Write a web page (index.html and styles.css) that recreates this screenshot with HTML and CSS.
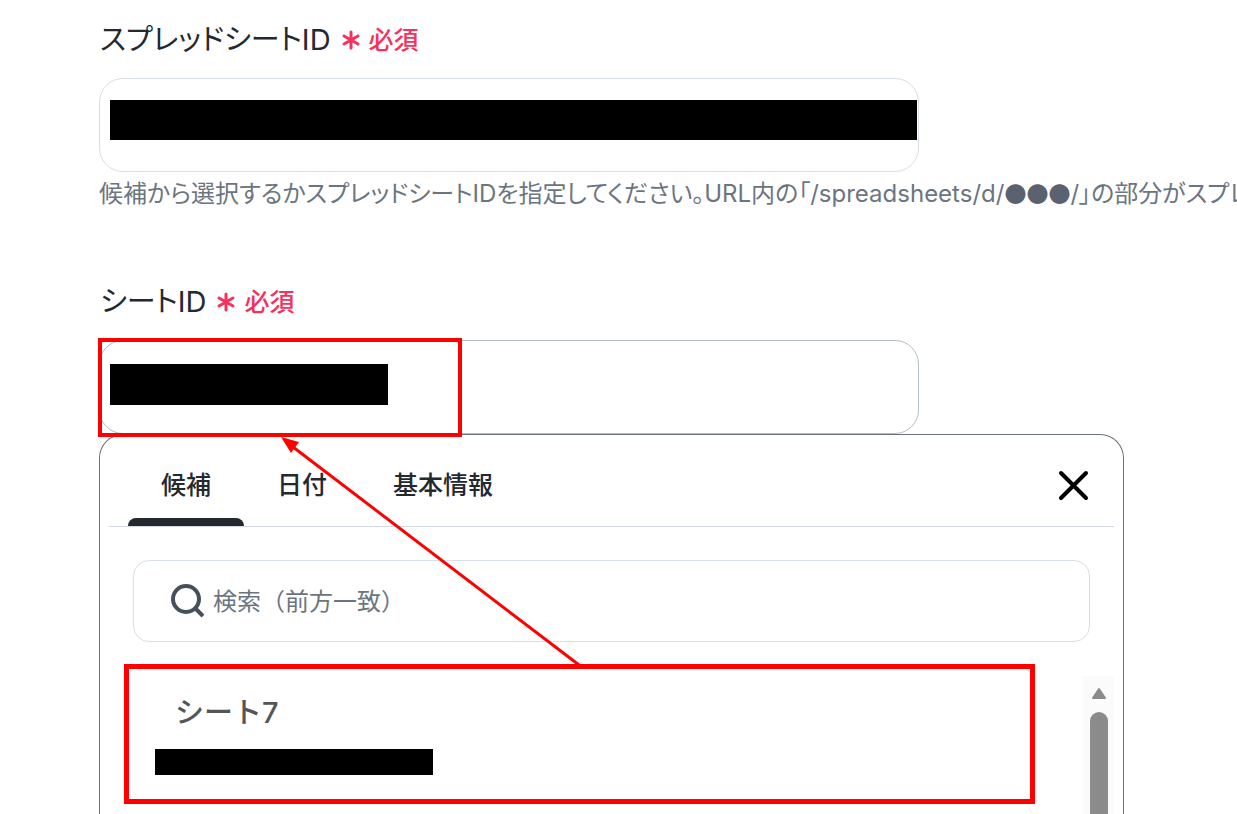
FILE: index.html
```html
<!DOCTYPE html>
<html lang="ja">
<head>
<meta charset="utf-8">
<title>シートID</title>
<link rel="stylesheet" href="styles.css">
</head>
<body>
<main class="form">
  <section class="field">
    <label class="field-label" for="spreadsheet-id">スプレッドシートID <span class="required"><svg class="asterisk" viewBox="0 0 20 20" aria-hidden="true"><path d="M10 2v16M3 6l14 8M3 14l14-8"/></svg>必須</span></label>
    <div class="control">
      <input class="text-input" id="spreadsheet-id" type="text">
      <span class="mask mask-full"></span>
    </div>
    <p class="help">候補から選択するかスプレッドシートIDを指定してください。URL内の「/spreadsheets/d/<span class="dots">●●●</span>/」の部分がスプレ</p>
  </section>

  <section class="field">
    <label class="field-label" for="sheet-id">シートID <span class="required"><svg class="asterisk" viewBox="0 0 20 20" aria-hidden="true"><path d="M10 2v16M3 6l14 8M3 14l14-8"/></svg>必須</span></label>
    <div class="control">
      <input class="text-input is-active" id="sheet-id" type="text">
      <span class="mask mask-short"></span>
      <span class="mark mark-input"></span>
      <svg class="arrow" viewBox="0 0 310 236" aria-hidden="true"><path class="arrow-line" d="M14 11L304 232"/><path class="arrow-head" d="M2 1L20 6L12 17Z"/></svg>
    </div>
    <div class="panel">
      <header class="panel-head">
        <nav class="tabs">
          <button class="tab is-selected" type="button">候補</button>
          <button class="tab" type="button">日付</button>
          <button class="tab" type="button">基本情報</button>
        </nav>
        <button class="close" type="button" aria-label="閉じる"><svg viewBox="0 0 32 32" aria-hidden="true"><path d="M4 4l25 25M29 4L4 29"/></svg></button>
      </header>
      <div class="search">
        <svg class="search-icon" viewBox="0 0 34 34" aria-hidden="true"><circle cx="16" cy="15" r="13"/><path d="M25 24l8 8"/></svg>
        <input class="search-input" type="text" placeholder="検索（前方一致）" aria-label="検索（前方一致）">
      </div>
      <div class="results">
        <button class="option" type="button">
          <span class="option-name">シート7</span>
          <span class="option-id"></span>
        </button>
        <div class="scrollbar">
          <svg class="scroll-up" viewBox="0 0 16 13" aria-hidden="true"><path d="M8 2L14 11H2Z"/></svg>
          <span class="thumb"></span>
        </div>
      </div>
    </div>
  </section>
</main>
</body>
</html>
```
FILE: styles.css
```css
* { box-sizing: border-box; }

body {
  margin: 0;
  background: #fff;
  color: #23292f;
  font-family: Inter, "Noto Sans CJK JP", sans-serif;
}

button, input {
  font: inherit;
  color: inherit;
}

button {
  border: 0;
  padding: 0;
  background: none;
}

.form {
  display: flex;
  flex-direction: column;
  gap: 74px;
  height: 100vh;
  overflow: hidden;
  padding: 20px 0 0 99px;
}

.field-label {
  display: flex;
  align-items: center;
  gap: 10px;
  height: 40px;
  margin-bottom: 18px;
  padding-left: 1px;
  font-size: 29px;
  line-height: 40px;
  font-feature-settings: "palt";
}

.required {
  display: flex;
  align-items: center;
  gap: 8px;
  color: #f5325c;
  font-size: 25px;
  font-weight: 500;
  font-feature-settings: normal;
}

.asterisk {
  width: 20px;
  height: 20px;
  fill: none;
  stroke: currentColor;
  stroke-width: 3;
  stroke-linecap: round;
}

.control {
  position: relative;
  max-width: 820px;
}

.text-input {
  display: block;
  width: 100%;
  height: 94px;
  padding: 0 24px;
  border: 1px solid #d9dfe6;
  border-radius: 24px;
  background: #fff;
  font-size: 25px;
}

.text-input.is-active { border-color: #b3bec8; }

.mask {
  position: absolute;
  left: 11px;
  height: 40px;
  background: #000;
}

.mask-full { top: 22px; right: 2px; }
.mask-short { top: 24px; width: 278px; height: 41px; }

.mark {
  position: absolute;
  border: 4px solid #f00;
}

.mark-input {
  z-index: 2;
  top: -2px;
  left: -1px;
  width: 364px;
  height: 99px;
}

.arrow {
  position: absolute;
  z-index: 3;
  top: 96px;
  left: 180px;
  width: 310px;
  height: 236px;
  pointer-events: none;
}

.arrow-line { fill: none; stroke: #f00; stroke-width: 3; }
.arrow-head { fill: #f00; }

.help {
  margin: 0;
  padding-top: 4px;
  overflow: hidden;
  color: #6b7580;
  font-size: 24px;
  line-height: 32px;
  height: 36px;
  white-space: nowrap;
  font-feature-settings: "palt";
}

.dots {
  color: #59626e;
  font-family: "Noto Sans CJK JP", sans-serif;
  font-size: 22px;
}

.panel {
  max-width: 1025px;
  margin-right: 24px;
  padding: 0 9px;
  border: 1px solid #69717b;
  border-bottom: 0;
  border-radius: 24px 24px 0 0;
  background: #fff;
}

.panel-head {
  display: flex;
  align-items: stretch;
  justify-content: space-between;
  height: 92px;
  border-bottom: 1px solid #d3dae1;
}

.tabs {
  display: flex;
  padding-left: 19px;
}

.tab {
  display: flex;
  flex-direction: column;
  justify-content: space-between;
  padding: 32px 33px 0;
  font-size: 25px;
  line-height: 36px;
  font-weight: 500;
}

.tab.is-selected::after {
  content: "";
  align-self: stretch;
  height: 8px;
  margin: 0 -33px;
  border-radius: 8px 8px 0 0;
  background: #23292f;
}

.close {
  width: 32px;
  height: 32px;
  margin: 34px 25px 0 0;
}

.close svg { display: block; }
.close path { fill: none; stroke: #000; stroke-width: 4; stroke-linecap: round; }

.search {
  display: flex;
  align-items: center;
  gap: 9px;
  height: 82px;
  margin: 33px 24px 22px;
  padding: 0 36px;
  border: 1px solid #d9dfe6;
  border-radius: 16px;
}

.search:focus-within { border-color: #69717b; }

.search-icon {
  flex: none;
  width: 34px;
  height: 34px;
  fill: none;
  stroke: #46505a;
  stroke-width: 4;
}

.search-input {
  flex: 1;
  min-width: 0;
  padding: 0;
  border: 0;
  outline: 0;
  background: none;
  font-size: 24px;
}

.search-input::placeholder { color: #6b7580; opacity: 1; }

.results {
  display: flex;
  align-items: flex-start;
  justify-content: space-between;
  padding-left: 15px;
}

.option {
  display: flex;
  flex: 1;
  flex-direction: column;
  align-items: flex-start;
  gap: 16px;
  height: 140px;
  margin-right: 48px;
  padding: 24px 26px;
  border: 5px solid #f00;
}

.option-name {
  padding-left: 20px;
  color: #555;
  font-size: 29px;
  line-height: 40px;
  font-weight: 500;
}

.option-id {
  width: 278px;
  height: 26px;
  background: #000;
}

.scrollbar {
  display: flex;
  flex-direction: column;
  align-items: center;
  gap: 12px;
  width: 31px;
  height: 200px;
  margin-top: 12px;
  padding-top: 11px;
  background: #fbfbfb;
}

.scroll-up { flex: none; width: 16px; height: 13px; }
.scroll-up path { fill: #8b8b8b; stroke: #8b8b8b; stroke-width: 2; stroke-linejoin: round; }

.thumb {
  flex: 1;
  width: 18px;
  border-radius: 9px;
  background: #8b8b8b;
}
```
